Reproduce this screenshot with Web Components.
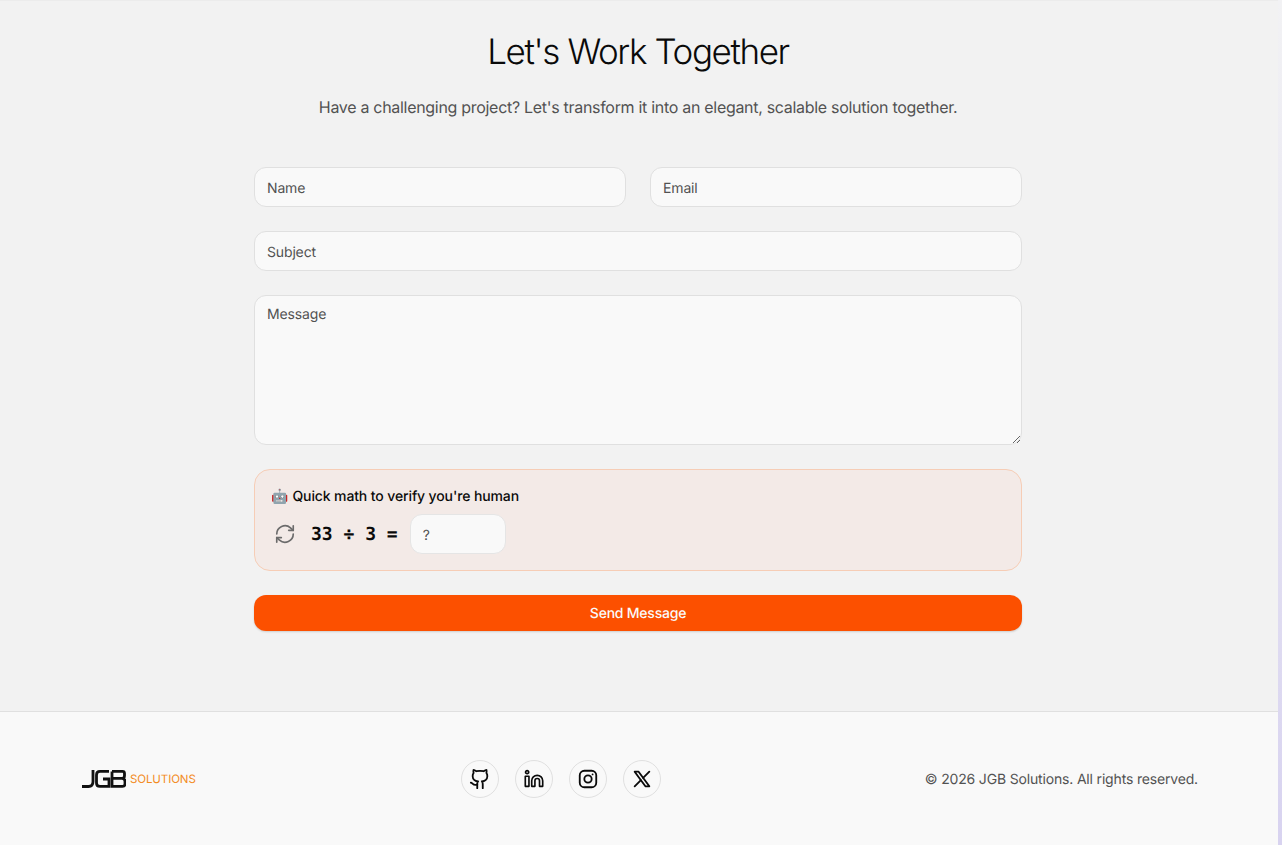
<!DOCTYPE html>
<html><head><meta charset="utf-8"><style>
html,body{margin:0;padding:0;height:845px;overflow:hidden;background:linear-gradient(#f2f2f4,#d8d3f0)}
body{font-family:Inter,"Noto Sans",sans-serif;text-rendering:geometricPrecision}
</style></head><body>
<template id="t-page"><style>
:host{display:flex;flex-direction:column;width:1278px;height:845px;background:#f2f2f2;border-top:1px solid #ececec;box-sizing:border-box}
main{flex:1;display:flex;flex-direction:column;align-items:center;padding-right:2px}
footer{height:134px}
</style><main><slot></slot></main><footer><slot name="footer"></slot></footer></template>

<template id="t-hero"><style>
:host{display:block;text-align:center;color:#0a0a0a;padding-top:29px}
h1{margin:0;font:300 35px/44px Inter,sans-serif;letter-spacing:-1.4px}
p{margin:21px 0 0;font:400 16px/24px Inter,sans-serif;color:#525252;letter-spacing:-.3px}
</style><h1><slot name="title"></slot></h1><p><slot></slot></p></template>

<template id="t-form"><style>
:host{display:flex;flex-direction:column;gap:24px;width:768px;margin-top:48px}
.row{display:grid;grid-template-columns:1fr 1fr;gap:24px}
</style><div class="row"><slot name="a"></slot></div><slot></slot></template>

<template id="t-field"><style>
:host{display:block}
input,textarea{display:block;width:100%;box-sizing:border-box;height:40px;padding:9px 12px 7px;border:1px solid #e0e0e0;border-radius:12px;background:#f9f9f9;font:400 14px/20px Inter,sans-serif;letter-spacing:-.15px;color:#0a0a0a;outline:none;margin:0;text-rendering:geometricPrecision}
textarea{height:150px;resize:vertical}
::placeholder{color:#525252;opacity:1}
</style><span id="h"></span></template>

<template id="t-captcha"><style>
:host{display:block;box-sizing:border-box;height:102px;padding:17px 16px 16px;border:1px solid #f6cdb6;border-radius:16px;background:#f3eae7}
.l{font:500 14px/20px Inter,sans-serif;letter-spacing:-.12px;color:#0a0a0a;display:flex;align-items:center;gap:4px}
.r{display:flex;align-items:center;margin-top:7px}
.r svg{display:block;margin:0 15px 0 3px}
.m{font:700 18px/28px "DejaVu Sans Mono","Liberation Mono",monospace;color:#0a0a0a;white-space:pre;padding-top:2px}
input{box-sizing:border-box;width:96px;height:40px;margin-left:12px;padding:9px 12px 7px;border:1px solid #e5e5e5;border-radius:12px;background:#f9f9f9;font:400 14px/20px Inter,sans-serif;outline:none;text-rendering:geometricPrecision}
::placeholder{color:#525252;opacity:1}
.e{font-size:14px;line-height:20px;letter-spacing:0}
</style><div class="l"><span class="e">🤖</span><span><slot name="label"></slot></span></div>
<div class="r"><svg width="22" height="22" viewBox="0 0 24 24" fill="none" stroke="#6b6b6b" stroke-width="1.8" stroke-linecap="round" stroke-linejoin="round" aria-hidden="true"><path d="M3 12a9 9 0 0 1 15-6.700L21 8"/><path d="M21 3v5h-5"/><path d="M21 12a9 9 0 0 1-15 6.700L3 16"/><path d="M8 16H3v5"/></svg><span class="m"><slot></slot></span><input placeholder="?"></div></template>

<template id="t-button"><style>
:host{display:block;height:36px;border-radius:12px;background:#fc5000;color:#fafafa;font:500 14px/38px Inter,sans-serif;letter-spacing:-.22px;text-align:center;box-shadow:0 1px 2px rgba(0,0,0,.15)}
</style><slot></slot></template>

<template id="t-footer"><style>
:host{display:flex;justify-content:space-between;align-items:center;height:100%;box-sizing:border-box;border-top:1px solid #e0e0e0;background:#f9f9f9;padding:0 80px 0 82px}
.e{font:400 14px/20px Inter,sans-serif;letter-spacing:-.17px;color:#525252;padding-top:2px}
.s{display:flex;gap:16px}
</style><div><slot name="logo"></slot></div><div class="s"><slot name="social"></slot></div><div class="e"><slot></slot></div></template>

<template id="t-social"><style>
:host{display:flex;align-items:center;justify-content:center;width:38px;height:38px;box-sizing:border-box;border:1px solid #e0e0e0;border-radius:50%}
</style><slot></slot></template>

<template id="t-logo"><style>
:host{display:flex;align-items:flex-end;width:115px;color:#f38b1d;font:400 11.5px/14px Inter,sans-serif}
svg{display:block;margin-right:4px}
span{letter-spacing:-.1px;position:relative;top:-2px}
</style><svg width="44" height="19" viewBox="0 0 44 19" fill="none" stroke="#111" stroke-width="2.800" aria-hidden="true"><path d="M11 1v11.500q0 5-4.500 5H0"/><path d="M27 2.400H18q-3.500 0-3.500 3.500v8q0 3.500 3.500 3.500h9V10h-6"/><path d="M30 2.400h10.500q2 0 2 2v2q0 3-2.500 3h-10M40 9.400q3 0 3 3v2.500q0 2.500-2.500 2.500H30V2.400"/></svg><span><slot></slot></span></template>

<x-page>
  <x-hero><span slot="title">Let's Work Together</span>Have a challenging project? Let's transform it into an elegant, scalable solution together.</x-hero>
  <x-form>
    <x-field slot="a" data-ph="Name"></x-field>
    <x-field slot="a" data-ph="Email"></x-field>
    <x-field data-ph="Subject"></x-field>
    <x-field data-ph="Message" data-multi="1"></x-field>
    <x-captcha><span slot="label">Quick math to verify you're human</span>33 ÷ 3 =</x-captcha>
    <x-button>Send Message</x-button>
  </x-form>
  <x-footer slot="footer">
    <x-logo slot="logo">SOLUTIONS</x-logo>
    <x-social slot="social"><svg width="22" height="22" viewBox="0 0 24 24" fill="none" stroke="#0a0a0a" stroke-width="2" stroke-linecap="round" stroke-linejoin="round"><path d="M15 22v-4a4.800 4.800 0 0 0-1-3.500c3 0 6-2 6-5.500.08-1.250-.27-2.480-1-3.500.28-1.150.28-2.350 0-3.500 0 0-1 0-3 1.500-2.640-.5-5.360-.5-8 0C6 2 5 2 5 2c-.3 1.150-.3 2.350 0 3.500A5.400 5.400 0 0 0 4 9c0 3.500 3 5.500 6 5.500-.39.490-.68 1.050-.85 1.650-.17.600-.22 1.230-.15 1.850v4"/><path d="M9 18c-4.510 2-5-2-7-2"/></svg></x-social>
    <x-social slot="social"><svg width="22" height="22" viewBox="0 0 24 24" fill="none" stroke="#0a0a0a" stroke-width="1.800" stroke-linecap="round" stroke-linejoin="round"><circle cx="4.500" cy="4.500" r="1.700"/><path d="M2.500 9h4v11h-4z"/><path d="M9.500 20v-6a6 6 0 0 1 12 0v6h-3.500v-6a2.500 2.500 0 0 0-5 0v6z"/></svg></x-social>
    <x-social slot="social"><svg width="22" height="22" viewBox="0 0 24 24" fill="none" stroke="#0a0a0a" stroke-width="2" stroke-linecap="round" stroke-linejoin="round"><rect x="3" y="3" width="18" height="18" rx="5"/><circle cx="12" cy="12" r="4"/><path d="M17 7v.01"/></svg></x-social>
    <x-social slot="social"><svg width="22" height="22" viewBox="0 0 24 24" fill="none" stroke="#0a0a0a" stroke-width="2" stroke-linecap="round" stroke-linejoin="round"><path d="M4 4l11.700 16H20L8.300 4z"/><path d="M4 20l6.800-6.800M13.200 10.800L20 4"/></svg></x-social>
    © 2026 JGB Solutions. All rights reserved.
  </x-footer>
</x-page>
<script>
function def(n,id,init){customElements.define(n,class extends HTMLElement{constructor(){super();this.attachShadow({mode:'open'}).appendChild(document.getElementById(id).content.cloneNode(true));}connectedCallback(){init&&init(this)}})}
def('x-page','t-page');def('x-hero','t-hero');def('x-form','t-form');
def('x-field','t-field',e=>{const s=e.shadowRoot,h=s.getElementById('h');if(!h)return;const f=document.createElement(e.dataset.multi?'textarea':'input');f.placeholder=e.dataset.ph;h.replaceWith(f)});
def('x-captcha','t-captcha');def('x-button','t-button');def('x-footer','t-footer');def('x-social','t-social');def('x-logo','t-logo');
</script>
</body></html>
